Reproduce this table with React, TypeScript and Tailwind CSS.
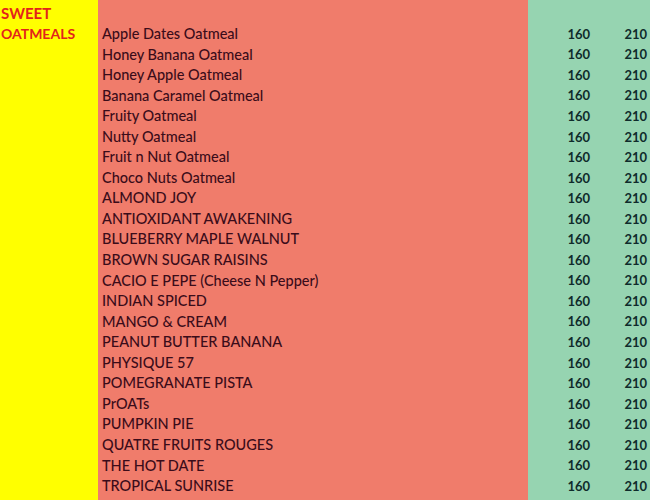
const items = [
  "Apple Dates Oatmeal",
  "Honey Banana Oatmeal",
  "Honey Apple Oatmeal",
  "Banana Caramel Oatmeal",
  "Fruity Oatmeal",
  "Nutty Oatmeal",
  "Fruit n Nut Oatmeal",
  "Choco Nuts Oatmeal",
  "ALMOND JOY",
  "ANTIOXIDANT AWAKENING",
  "BLUEBERRY MAPLE WALNUT",
  "BROWN SUGAR RAISINS",
  "CACIO E PEPE (Cheese N Pepper)",
  "INDIAN SPICED",
  "MANGO & CREAM",
  "PEANUT BUTTER BANANA",
  "PHYSIQUE 57",
  "POMEGRANATE PISTA",
  "PrOATs",
  "PUMPKIN PIE",
  "QUATRE FRUITS ROUGES",
  "THE HOT DATE",
  "TROPICAL SUNRISE",
];

export default function App() {
  return (
    <main
      className="w-[650px] h-[500px] overflow-hidden flex"
      style={{ fontFamily: "Lato, 'Open Sans', sans-serif" }}
    >
      {/* category column */}
      <div className="w-[98px] bg-[#ffff00] pl-[1px] text-[#e3231b] font-bold leading-none">
        <div className="h-[24px] pt-[3px] flex items-center text-[15px]">SWEET</div>
        <div className="h-[20.55px] flex items-center text-[14px]">OATMEALS</div>
      </div>

      {/* names */}
      <div className="w-[430px] bg-[#f07c6b] pl-[4px] text-[#3b0c1a] text-[14.5px] font-medium">
        <div className="h-[24px]" />
        {items.map((name) => (
          <div key={name} className="h-[20.55px] flex items-center leading-none">
            {name}
          </div>
        ))}
      </div>

      {/* prices */}
      <div className="flex-1 bg-[#96d4b1] text-[#0f2b2b] text-[13px] font-bold">
        <div className="h-[24px]" />
        {items.map((name) => (
          <div key={name} className="h-[20.55px] flex items-center leading-none">
            <span className="w-[62px] text-right">160</span>
            <span className="w-[57px] text-right">210</span>
          </div>
        ))}
      </div>
    </main>
  );
}
